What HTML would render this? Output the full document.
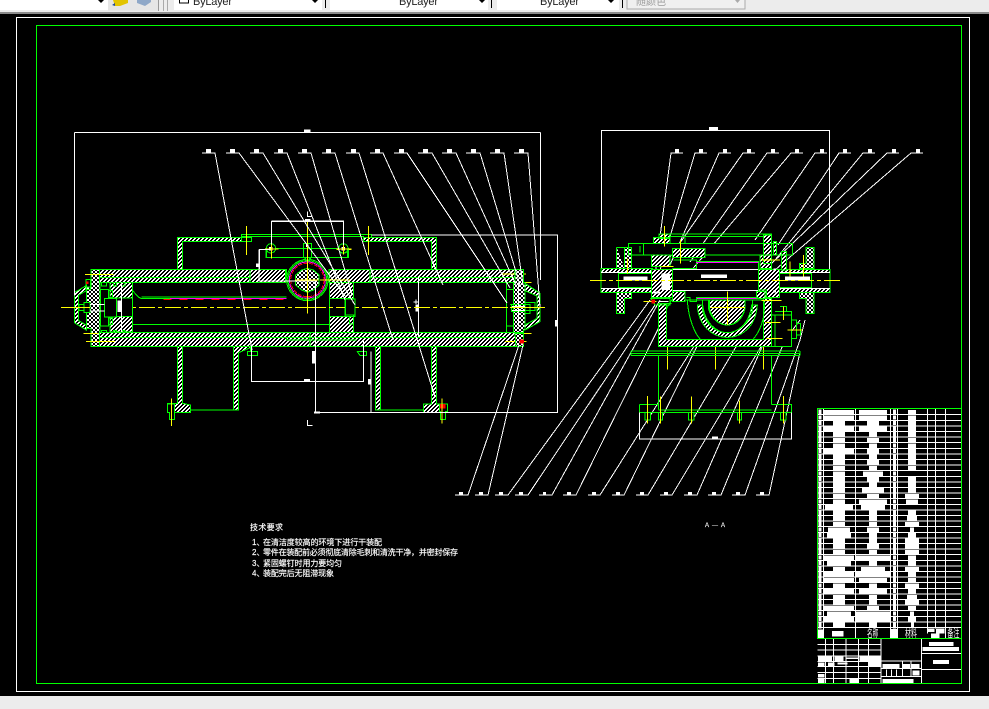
<!DOCTYPE html>
<html><head><meta charset="utf-8"><style>
html,body{margin:0;padding:0;background:#000;width:989px;height:709px;overflow:hidden}
svg{display:block}
.g{stroke:#0f0;fill:none;stroke-width:3}
.gk{stroke:#0f0;fill:#000;stroke-width:3}
.h{stroke:#0f0;fill:url(#h);stroke-width:3}
.x{stroke:#0f0;fill:url(#x);stroke-width:3}
.w{stroke:#fff;fill:none;stroke-width:3}
.f{fill:#fff;stroke:none}
.y{stroke:#ff0;fill:none;stroke-width:3;}
.yd{stroke:#ff0;fill:none;stroke-width:3;stroke-dasharray:48 9 12 9}
.m{stroke:#f0f;fill:none;stroke-width:3}
.r{stroke:#f00;fill:none;stroke-width:3}
.rf{fill:#f00;stroke:none}
.t{font-family:"Liberation Sans","Noto Sans CJK SC",sans-serif}
</style></head><body>
<svg width="989" height="709" viewBox="0 0 989 709" xmlns="http://www.w3.org/2000/svg">
<defs>
<pattern id="h" width="12" height="12" patternUnits="userSpaceOnUse"><rect width="12" height="12" fill="#000"/><path shape-rendering="crispEdges" fill="#fff" d="M0 0h6v3H0zM0 3h3v3H0zM9 3h3v3H9zM6 6h6v3H6zM3 9h6v3H3z"/></pattern>
<pattern id="x" width="12" height="12" patternUnits="userSpaceOnUse"><rect width="12" height="12" fill="#000"/><path shape-rendering="crispEdges" fill="#fff" d="M0 0h3v3H0zM9 0h3v3H9zM3 3h6v3H3zM3 6h6v3H3zM0 9h3v3H0zM9 9h3v3H9z"/></pattern>
</defs>
<rect width="989" height="709" fill="#000"/>

<!-- toolbar -->
<rect width="989" height="13" fill="#ececec"/>
<rect y="12" width="989" height="2" fill="#8a8a8a"/>
<rect width="108" height="10" fill="#fff"/><path d="M98 0h6l-3 3z" fill="#000"/>
<rect x="108" width="50" height="11" fill="#e6e6e6"/>
<path d="M113 0h15v3l-8 3h-5z" fill="#e2c400"/><path d="M112 5l3-2v3z" fill="#234a9a"/>
<path d="M137 0h14v2l-6 4-8-3z" fill="#8fa8c8"/>
<rect x="158" y="0" width="1" height="11" fill="#999"/>
<rect x="163" y="0" width="1" height="11" fill="#aaa"/><rect x="167" y="0" width="1" height="11" fill="#aaa"/>
<rect x="174" width="148" height="10" fill="#fff"/><rect x="325" width="1" height="8" fill="#000"/>
<rect x="330" width="158" height="10" fill="#fff"/><rect x="491" width="1" height="8" fill="#000"/>
<rect x="497" width="122" height="10" fill="#fff"/><rect x="622" width="1" height="8" fill="#000"/>
<rect x="627" y="-1" width="118" height="10" fill="#f0f0f0" stroke="#aaa"/>
<rect x="179.500" y="-4" width="9" height="7" fill="#fff" stroke="#000"/>
<g class="t" font-size="11" fill="#222">
<text x="193" y="5" textLength="39">ByLayer</text><text x="399" y="5" textLength="39">ByLayer</text><text x="540" y="5" textLength="39">ByLayer</text>
<text x="636" y="5" fill="#999" font-size="10">随颜色</text></g>
<path d="M312 0h6l-3 3zM479 0h6l-3 3zM608 0h6l-3 3z" fill="#000"/><path d="M735 0h5l-2.500 3z" fill="#aaa"/>
<rect y="696" width="989" height="13" fill="#ececec"/>

<g shape-rendering="crispEdges">
<!-- frames -->
<rect x="16.500" y="17.500" width="953" height="674" fill="none" stroke="#fff"/>
<rect x="36.500" y="25.500" width="925" height="658" fill="none" stroke="#0f0"/>

<!-- zoom3 left half -->
<g transform="translate(60,120) scale(.33333)">
<path class="h" d="M352 448V352H545V365H368V448Z"/>
<path class="g" d="M545 352V343H780M545 350H780M545 352H575V365H545"/>
<rect class="h" x="95" y="448" width="584" height="40"/>
<path class="g" d="M115 472H679M115 448V488"/>
<rect class="h" x="95" y="637" width="690" height="43"/>
<path class="g" d="M115 652H785M115 637V680M680 652V660H785"/>
<path class="h" d="M352 680V850H322V878H392V870H520V700H536V695L560 680V680H520V870H392V855L368 850V680Z"/>
<path class="gk" d="M368 680H520V870H392V855L368 850Z"/>
<path class="h" d="M520 680H578L536 698V870H520Z"/>
<path class="gk" d="M322 852H344V898H328V878H322Z"/>
<path class="g" d="M562 695H592V706H562ZM572 680V695"/>
<path class="y" d="M559 318V405M334 835V918M742 320V578"/>
<path class="g" d="M620 385H780M620 412H780M620 385V412M735 370H752V420H735Z"/>
<path class="w" d="M634 388V305H780M598 482V388H632M598 482H770M575 680V785H780"/>
<path class="f" d="M735 297h16v8h-16zM732 28h20v9h-20zM756 693h11v38h-11zM732 777h18v7h-18zM762 874h18v6h-18zM588 430h7v11h-7z"/>
<path class="w" d="M743 275V290H758M743 900V916H758M44 37V560M44 37H780"/>
<path class="g" d="M218 613H780M245 531H680"/>
<path class="m" d="M245 536H680"/>
<path class="r" d="M310 538H690" stroke-dasharray="24 24"/>
<path class="yd" d="M3 562H780"/>
</g>

<!-- zoom4 right half -->
<g transform="translate(310,120) scale(.33333)">
<path class="h" d="M160 352H380V448H365V365H160Z"/>
<path class="g" d="M0 343H185V352M0 350H160V365"/>
<rect class="h" x="58" y="448" width="582" height="40"/>
<path class="g" d="M58 472H615"/>
<rect class="h" x="0" y="637" width="620" height="43"/>
<path class="g" d="M0 652H590M0 660H140"/>
<path class="h" d="M58 488H130V535H58ZM58 590H130V637H58Z"/>
<path class="gk" d="M58 535H130V590H58Z"/>
<path class="g" d="M105 537H135V590H105ZM118 590H130V612H118ZM0 613H58"/>
<path class="h" d="M196 680H212V870H340V852H365V680H380V852H390V878H340V870H196Z"/>
<path class="g" d="M160 680H212M212 680V870"/>
<path class="g" d="M142 695H170V706H150Z"/>
<path class="gk" d="M388 852H412V875H406V898H392V875H388Z"/>
<rect class="rf" x="390" y="852" width="16" height="13"/>
<path class="y" d="M396 835V910M175 318V405M160 660V706M30 481H75M575 462H648M620 487H665M625 640H665M585 664H650"/>
<path class="x" d="M615 448H640V488H645V630H640V637H610V490H615Z"/>
<path class="h" d="M645 490L690 520V605L645 630Z"/>
<path class="gk" d="M645 512L681 528V595L645 615Z"/>
<path class="gk" d="M590 508H610V618H590Z"/>
<path class="g" d="M590 488V637H610M600 553H660V580H645V575H605V553M645 548H675V572H645"/>
<path class="x" d="M615 640H640V680H618Z"/>
<rect class="rf" x="628" y="658" width="14" height="12"/>
<path class="w" d="M606 560H645M606 572H645M325 470V650M625 488V620"/>
<path class="f" d="M316 553h10v22h-10zM310 544h15v3h-15zM316 538h3v14h-3zM735 600h7v20h-7zM174 777h10v17h-10z"/>
<path class="w" d="M183 695V878M160 660V785H0M692 37H0M692 37V480M185 345H743V877H15M16 480V877M100 305H0M100 305V385"/>
<path class="g" d="M80 385H115V412H0M113 385V412"/>
<circle class="g" cx="100" cy="386" r="14"/>
<path class="f" d="M95 382h9v9h-9z"/>
<path class="y" d="M80 388H125M100 372V400"/>
<path class="yd" d="M0 562H600"/><path class="y" d="M600 562H705"/>
</g>

<!-- zoom11 left end -->
<g transform="translate(70,262) scale(.33333)">
<path class="h" d="M13 92L50 70V205L13 182Z"/>
<path class="gk" d="M25 100L50 85V190L25 175Z"/>
<path class="x" d="M63 22H88V62H90V210H88V253H63V200H50V75H63Z"/>
<path class="h" d="M120 62H187V108H120ZM120 163H187V210H120Z"/>
<path class="gk" d="M92 82H115V192H92Z"/>
<path class="g" d="M115 85H128V106H115ZM115 168H128V188H115ZM88 62H187V212H88M95 62H110V72H95ZM130 62H140V72H130ZM155 62H165V72H155ZM95 205H110V212H95ZM130 205H140V212H130ZM155 205H165V212H155"/>
<path class="gk" d="M140 108H187V163H140Z"/>
<path class="gk" d="M103 110H140V165H103Z"/>
<path class="gk" d="M42 122H60V152H42ZM27 128H42V146H27Z"/>
<path class="w" d="M60 127H103M60 147H103M14 0V100M155 62V210"/>
<path class="f" d="M143 115h12v35h-12z"/>
<path class="g" d="M48 52H62V82H48Z"/><rect class="rf" x="48" y="58" width="8" height="8"/>
<path class="g" d="M187 62H300M187 85L205 105L215 110H300M187 187H300"/>
<path class="y" d="M45 38H130M40 214H85M48 238H135M0 136H60"/>
</g>

<!-- zoom12 gear -->
<g transform="translate(250,215) scale(.33333)">
<path d="M0 163H107V203H0ZM237 163H360V203H237Z" class="h"/>
<circle cx="172" cy="195" r="64" fill="#000"/>
<rect class="h" x="238" y="203" width="72" height="47"/>
<rect class="g" x="238" y="203" width="72" height="47"/>
<rect class="gk" x="287" y="252" width="28" height="48"/>
<circle class="g" cx="172" cy="195" r="62"/><circle class="g" cx="172" cy="195" r="58"/>
<circle class="m" cx="172" cy="195" r="54" stroke-dasharray="30 2"/>
<circle class="r" cx="172" cy="195" r="50" stroke-dasharray="12 4"/>
<path class="x" d="M172 160L190 165L207 180V210L190 225L172 232L155 225L137 210V180L155 165Z"/>
<path class="g" d="M172 160L190 165L207 180V210L190 225L172 232L155 225L137 210V180L155 165Z"/>
<path class="gk" d="M160 85H185V128H178V135H166V128H160Z"/>
<path class="f" d="M168 88h8v8h-8z"/>
<path class="g" d="M48 100H295V127H48Z"/>
<circle class="gk" cx="63" cy="100" r="14"/><circle class="gk" cx="280" cy="100" r="14"/>
<path class="f" d="M57 96h11v10h-11zM274 96h11v10h-11z"/>
<path class="y" d="M45 102H85M260 102H305M64 85V130M280 85V118M172 20V295M135 195H205M210 195H300"/>
<path class="w" d="M64 18H281V90M64 18V88M27 103H60M27 103V198H197M197 198V300"/>
<path class="f" d="M165 13h15v8h-15zM18 145h9v10h-9z"/>
</g>

<!-- leaders -->
<path fill="none" stroke="#fff" stroke-width="1" d="M202 153H215L252 350M226 153H239L345 296M250 153H263L355 305M274 153H287L345 300M298 153H311L352 295M322 153H335L393 340M346 153H359L435 397M370 153H383L443 285M394 153H407L507 303M418 153H432L510 288M442 153H456L516 285M466 153H480L520 285M490 153H504L523 285M514 153H528L540 307"/>
<path fill="none" stroke="#fff" stroke-width="1" d="M683 153H671L655 275M707 153H695L660 270M731 153H719L670 265M755 153H743L668 260M779 153H767L690 262M803 153H791L690 272M827 153H815L755 240M851 153H839L778 245M875 153H863L775 260M899 153H887L770 265M923 153H911L775 270"/>
<path fill="none" stroke="#fff" stroke-width="1" d="M455 495H468L519 345M475 495H488L523 345M495 495H508L650 300M515 495H528L655 305M539 495H552L660 300M563 495H576L665 315M588 495H600L698 340L708 312M612 495H624L700 340L725 300M636 495H648L740 340L760 310M660 495H672L765 340L775 320M684 495H697L765 340M708 495H721L785 340L800 320M732 495H745L800 340L805 320M756 495H769L800 352"/>
<path fill="#fff" d="M206 149h5v4h-5zM230 149h5v4h-5zM254 149h5v4h-5zM278 149h5v4h-5zM302 149h5v4h-5zM326 149h5v4h-5zM351 149h5v4h-5zM375 149h5v4h-5zM399 149h5v4h-5zM423 149h5v4h-5zM447 149h5v4h-5zM471 149h5v4h-5zM495 149h5v4h-5zM519 149h5v4h-5zM675 149h4v4h-4zM699 149h4v4h-4zM723 149h4v4h-4zM747 149h4v4h-4zM771 149h4v4h-4zM795 149h4v4h-4zM820 149h4v4h-4zM843 149h4v4h-4zM868 149h4v4h-4zM892 149h4v4h-4zM916 149h4v4h-4zM459 492h4v3h-4zM479 492h4v3h-4zM499 492h4v3h-4zM519 492h4v3h-4zM543 492h3v3h-3zM567 492h4v3h-4zM592 492h4v3h-4zM616 492h4v3h-4zM640 492h4v3h-4zM664 492h4v3h-4zM688 492h4v3h-4zM712 492h4v3h-4zM736 492h4v3h-4zM760 492h4v3h-4z"/>

<!-- right view -->
<path fill="none" stroke="#fff" d="M601.500 270V130.500H829.500V270"/>
<path fill="#fff" d="M709 127h9v4h-9z"/>
<g transform="translate(590,210) scale(.33333)">
<path class="x" d="M80 112H104V175H125V112ZM80 112V175H104M80 248H125V265H104V310H80Z" style="fill-rule:nonzero"/>
<path class="h" d="M33 175H187V188H33ZM33 235H187V248H33ZM568 178H720V188H568ZM568 235H720V248H568Z"/>
<path class="x" d="M648 112H672V175H628V160H648ZM628 248H672V310H648V265H628Z"/>
<path class="gk" d="M33 188H187V235H33Z"/><path class="g" d="M85 190H187V233H85Z"/>
<path class="gk" d="M568 188H720V235H568Z"/><path class="g" d="M568 190H665V233H568Z"/>
<path class="f" d="M100 200h72v11h-72zM585 200h75v11h-75z"/>
<path class="w" d="M33 188H187M33 235H187M568 188H720M568 235H720"/>
<path class="g" d="M190 82V170M207 72H545V170M207 80H520M285 82V100"/>
<path class="h" d="M190 82H240V100H190ZM520 75H545V160H520ZM575 125H590V180H575ZM207 72H240V85H207ZM247 115H345V143H247ZM185 135H240V170H185ZM550 95H560V135H550ZM510 135H545V175H510Z"/>
<path class="gk" d="M160 100H520V135H160Z"/>
<path class="h" d="M247 115H345V143H247Z"/>
<path class="g" d="M115 100H160V135H115ZM520 100H607V135H520ZM150 108V128M250 150H320V178M320 155H505V178"/>
<path class="h" d="M185 178H247V262H185ZM505 178H568V262H505Z"/>
<path class="f" d="M215 190h25v50h-25zM190 245h20v6h-20zM550 240h8v8h-8zM550 175h8v8h-8z"/>
<path class="gk" d="M247 178H505V242H247Z"/>
<path class="w" d="M247 178H505M247 242H505"/>
<path class="g" d="M247 176V244M505 176V244M505 240H530V262H505ZM247 176H320"/>
<path class="f" d="M333 193h78v11h-78z"/>
<path class="h" d="M205 280H230V388H520V265H545V388H555V410H205Z"/>
<path class="gk" d="M230 295L245 270H520V388H230Z"/>
<path class="h" d="M247 245H285V275H247ZM500 245H525V265H500Z"/>
<path class="m" d="M318 157H505M318 265H500"/>
<path class="g" d="M290 262H300V275H320V262H505M292 272C296 330 315 370 330 387M522 272C528 330 505 370 490 387M205 280H245"/>
<path class="h" d="M322 285H338C345 340 380 368 412 368C445 368 478 340 485 285H502C498 350 455 382 412 382C370 382 325 350 322 285Z"/>
<path class="g" d="M338 270V300C345 345 380 368 412 368C445 368 478 340 488 300V270"/>
<path class="h" d="M358 270H465V295C458 325 435 345 412 345C388 345 365 325 358 295Z"/>
<path class="g" d="M355 270V295C365 330 390 345 412 345C435 345 458 330 465 295V270"/>
<path class="y" d="M362 292H465M412 245V345M223 48V110M272 90V160M112 145V190M640 135V200M600 155V200M232 410V478M376 410V478M520 410V478M215 170H250M515 150H570M515 272H575M160 275H200"/>
<path class="yd" d="M0 211H750"/>
<path class="gk" d="M545 315H605V410H545Z"/>
<path class="g" d="M555 305H605V315M570 290H590V305M605 330H620V385H605M620 340H632V375H620M555 315V410"/>
<path class="y" d="M592 360H638M525 337H572M528 385H578M580 290V330"/>
<path class="g" d="M205 410H605M123 423H630M123 430H630M123 437H630M123 423V437M630 423V437M205 437V598M545 437V583M148 583H205M545 583H605V608H148V583M205 600H545"/>
<rect class="gk" x="165" y="608" width="16" height="22"/><rect class="gk" x="205" y="608" width="12" height="22"/><rect class="gk" x="296" y="608" width="16" height="22"/><rect class="gk" x="442" y="608" width="12" height="22"/><rect class="gk" x="572" y="608" width="16" height="22"/>
<path class="y" d="M172 558V640M211 560V640M304 560V640M448 572V640M580 558V640"/>
<path class="w" d="M148 608V687H605V608"/>
<path class="f" d="M366 679h18v7h-18z"/>
<path class="g" d="M182 265H240V285H195Z"/><rect class="rf" x="184" y="268" width="11" height="13"/>
<path class="w" d="M205 275H235"/>
</g>

<!-- parts list -->
<g transform="translate(810,400) scale(.33333)">
<path stroke="#fff" stroke-width="13" fill="none" d="M42 36H132M147 36H231M294 36H318M42 53H132M147 53H231M294 53H318M69 70H105M171 70H207M294 70H318M42 86H132M147 86H231M294 86H318M69 103H105M177 103H201M294 103H318M69 120H105M171 120H207M294 120H318M69 137H105M177 137H201M294 137H318M42 154H132M171 154H207M294 154H318M69 170H105M177 170H201M294 170H318M69 187H105M171 187H207M294 187H318M69 204H105M177 204H201M294 204H318M69 221H105M159 221H219M69 238H105M171 238H207M294 238H318M69 254H105M177 254H201M294 254H318M69 271H105M156 271H222M294 271H318M69 288H105M171 288H207M285 288H327M69 305H105M147 305H231M288 305H324M45 322H129M153 322H225M69 338H105M177 338H201M294 338H318M69 355H105M177 355H201M291 355H321M69 372H105M177 372H201M285 372H327M54 389H120M171 389H207M300 389H312M51 406H123M177 406H201M294 406H318M69 422H105M177 422H201M285 422H327M69 439H105M171 439H207M285 439H327M69 456H105M177 456H201M285 456H327M42 473H132M138 473H240M294 473H318M51 490H123M177 490H201M294 490H318M69 507H105M153 507H225M285 507H327M42 523H132M138 523H240M294 523H318M42 540H132M147 540H231M294 540H318M69 557H105M177 557H201M285 557H327M42 574H132M147 574H231M294 574H318M69 591H105M177 591H201M291 591H321M69 607H105M177 607H201M285 607H327M42 624H132M171 624H207M294 624H318M51 641H123M138 641H240M300 641H312M42 658H132M138 658H240M294 658H318M69 674H105M177 674H201M303 674H312"/>
<path stroke="#fff" stroke-width="10" fill="none" stroke-dasharray="13 3.800" d="M30 29V685"/>
<path stroke="#fff" stroke-width="9" fill="none" stroke-dasharray="13 3.800" d="M253 29V685"/>
<path stroke="#fff" stroke-width="3" fill="none" d="M22 44H455M22 61H455M22 78H455M22 95H455M22 111H455M22 128H455M22 145H455M22 162H455M22 178H455M22 195H455M22 212H455M22 229H455M22 246H455M22 262H455M22 279H455M22 296H455M22 313H455M22 330H455M22 346H455M22 363H455M22 380H455M22 397H455M22 414H455M22 430H455M22 447H455M22 464H455M22 481H455M22 498H455M22 514H455M22 531H455M22 548H455M22 565H455M22 582H455M22 598H455M22 615H455M22 632H455M22 649H455M22 666H455M22 683H455M40 25V715M136 25V715M241 25V715M262 25V715M352 25V685M376 25V685M406 25V715"/>
<rect x="22" y="685" width="433" height="30" fill="#000"/>
<path stroke="#fff" stroke-width="3" fill="none" d="M40 685V715M136 685V715M241 685V715M262 685V715M352 685V700M406 685V715M22 683H455"/>
<path class="f" d="M242 687h20v28h-20zM24 688h16v27H24zM66 693h34v16H66zM354 686h20v10h-20zM363 700h26v15h-26zM378 686h25v14h-25z"/>
<path stroke="#0f0" stroke-width="3" fill="none" d="M22 25H455V715H22Z"/>
<g class="t" font-size="33" fill="#fff"><text x="171" y="711" textLength="34" lengthAdjust="spacingAndGlyphs">名称</text><text x="285" y="711" textLength="36" lengthAdjust="spacingAndGlyphs">材料</text><text x="412" y="711" textLength="36" lengthAdjust="spacingAndGlyphs">备注</text></g>
</g>

<!-- title block -->
<g transform="translate(810,550) scale(.33333)">
<path class="w" d="M22 283H213M22 300H213M22 318H213M22 335H213M22 350H213M22 368H213M22 385H213M46 265V400M70 265V400M108 265V400M145 265V400M175 265V400M213 265V400M334 265V400M215 333H334M215 356H334M215 380H334M230 358V380M245 358V380M260 358V380M277 333V380M303 333V380M334 310H455M334 358H455"/>
<path class="f" d="M24 320h42v13H24zM74 320h26v13H74zM148 320h26v14h-26zM176 320h36v28h-36zM110 323h34v4h-34zM24 338h20v10H24zM54 338h20v10H54zM82 338h30v6H82zM24 372h20v10H24zM24 386h20v13H24zM118 386h26v13h-26zM218 342h50v12h-50zM278 342h22v12h-22zM305 342h23v12h-23zM308 362h20v14h-20zM218 387h92v13h-92zM357 276h73v12h-73zM338 291h109v12H338zM369 330h48v12h-48z"/>
<path stroke="#0f0" stroke-width="3" fill="none" d="M22 265H455V400H22"/>
</g>
</g>

<!-- text -->
<g class="t" font-size="8" fill="#fff" stroke="#fff" stroke-width=".15">
<text x="250" y="530" textLength="33">技术要求</text>
<text x="252" y="545">1、</text><text x="263" y="545" textLength="119">在清洁度较高的环境下进行干装配</text>
<text x="252" y="555">2、</text><text x="263" y="555" textLength="195">零件在装配前必须彻底清除毛刺和清洗干净，并密封保存</text>
<text x="252" y="566">3、</text><text x="263" y="566" textLength="79">紧固螺钉时用力要均匀</text>
<text x="252" y="576">4、</text><text x="263" y="576" textLength="71">装配完后无阻滞现象</text>
<text x="705" y="527" font-size="6" textLength="20">A — A</text>
</g>
</svg>
</body></html>
